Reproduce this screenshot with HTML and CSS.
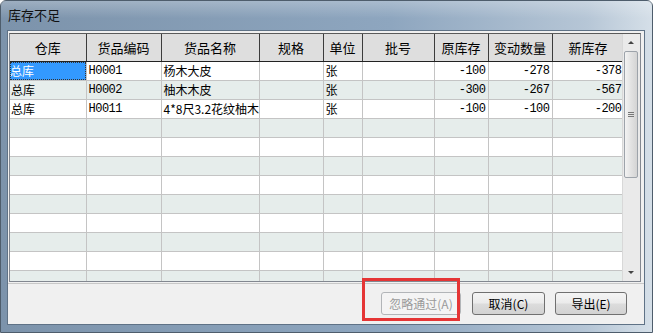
FILE: index.html
```html
<!DOCTYPE html>
<html lang="zh">
<head>
    <meta charset="UTF-8" />
    <title>库存不足</title>
    <link rel="stylesheet" href="styles.css">
</head>
<body>
    <div class="window">
        <div class="titlebar">库存不足</div>
        <div class="client">
            <div class="grid">
                <div class="table-wrap">
                    <table>
                        <colgroup>
                            <col style="width:76px"><col style="width:75px"><col style="width:98px">
                            <col style="width:64px"><col style="width:39px"><col style="width:72px">
                            <col style="width:54px"><col style="width:64px"><col style="width:72px">
                        </colgroup>
                        <thead>
                            <tr>
                                <th>仓库</th><th>货品编码</th><th>货品名称</th><th>规格</th><th>单位</th>
                                <th>批号</th><th>原库存</th><th>变动数量</th><th>新库存</th>
                            </tr>
                        </thead>
                        <tbody>
                            <tr>
                                <td><span class="selected">总库</span></td><td class="code">H0001</td><td>杨木大皮</td><td></td><td>张</td>
                                <td></td><td class="num">-100</td><td class="num">-278</td><td class="num">-378</td>
                            </tr>
                            <tr class="alt">
                                <td>总库</td><td class="code">H0002</td><td>柚木木皮</td><td></td><td>张</td>
                                <td></td><td class="num">-300</td><td class="num">-267</td><td class="num">-567</td>
                            </tr>
                            <tr>
                                <td>总库</td><td class="code">H0011</td><td>4*8尺3.2花纹柚木</td><td></td><td>张</td>
                                <td></td><td class="num">-100</td><td class="num">-100</td><td class="num">-200</td>
                            </tr>
                            <tr class="alt"><td></td><td></td><td></td><td></td><td></td><td></td><td></td><td></td><td></td></tr>
                            <tr><td></td><td></td><td></td><td></td><td></td><td></td><td></td><td></td><td></td></tr>
                            <tr class="alt"><td></td><td></td><td></td><td></td><td></td><td></td><td></td><td></td><td></td></tr>
                            <tr><td></td><td></td><td></td><td></td><td></td><td></td><td></td><td></td><td></td></tr>
                            <tr class="alt"><td></td><td></td><td></td><td></td><td></td><td></td><td></td><td></td><td></td></tr>
                            <tr><td></td><td></td><td></td><td></td><td></td><td></td><td></td><td></td><td></td></tr>
                            <tr class="alt"><td></td><td></td><td></td><td></td><td></td><td></td><td></td><td></td><td></td></tr>
                            <tr><td></td><td></td><td></td><td></td><td></td><td></td><td></td><td></td><td></td></tr>
                            <tr class="alt"><td></td><td></td><td></td><td></td><td></td><td></td><td></td><td></td><td></td></tr>
                            <tr><td></td><td></td><td></td><td></td><td></td><td></td><td></td><td></td><td></td></tr>
                        </tbody>
                    </table>
                </div>
                <div class="scrollbar">
                    <div class="arrow up"></div>
                    <div class="track">
                        <div class="thumb"><span class="grip"></span></div>
                    </div>
                    <div class="arrow down"></div>
                </div>
            </div>
            <div class="footer">
                <button class="btn" disabled>忽略通过(A)</button>
                <button class="btn">取消(C)</button>
                <button class="btn">导出(E)</button>
                <div class="mark"></div>
            </div>
        </div>
    </div>
</body>
</html>
```

FILE: styles.css
```css
body {
    margin: 0;
    background: #ffffff;
    font-family: "Noto Sans CJK SC", "DejaVu Sans", sans-serif;
    font-size: 12px;
    color: #000;
}

.window {
    width: 653px;
    height: 333px;
    box-sizing: border-box;
    background: linear-gradient(to right, #7c93ab 0%, #8ea6bf 60%, #b6c6d6 90%, #d5dfe8 100%);
    border: 1px solid #4e5d6c;
    border-radius: 6px 6px 0 0;
    display: flex;
    flex-direction: column;
}

.titlebar {
    height: 29px;
    line-height: 27px;
    padding-left: 7px;
    font-size: 13px;
    color: #111;
    background: linear-gradient(to bottom, rgba(255,255,255,0.25), rgba(255,255,255,0) 60%);
}

.client {
    position: relative;
    margin: 0 7px 7px 6px;
    flex: 1;
    background: #f0f0f0;
    border: 1px solid #5f7286;
    display: flex;
    flex-direction: column;
}

.grid {
    margin: 2px 0 0 1px;
    width: 632px;
    height: 249px;
    box-sizing: border-box;
    border: 1px solid #828790;
    border-top-color: #5a5a5a;
    background: #fff;
    display: flex;
    overflow: hidden;
}

.table-wrap {
    width: 614px;
    overflow: hidden;
}

table {
    border-collapse: collapse;
    table-layout: fixed;
    width: 614px;
}

th {
    height: 27px;
    background: #dedede;
    font-weight: normal;
    font-size: 13px;
    border-right: 1px solid #3c3c3c;
    border-bottom: 1px solid #222;
    padding: 0;
}

td {
    height: 18px;
    padding: 0 2px;
    border-right: 1px solid #c4c4c4;
    border-bottom: 1px solid #c4c4c4;
    white-space: nowrap;
    overflow: hidden;
    font-size: 12px;
    line-height: 18px;
}

tr.alt td {
    background: #e6edeb;
}

td.code {
    font-family: "Liberation Mono", "DejaVu Sans Mono", monospace;
    font-size: 12px;
    letter-spacing: -0.5px;
}

td.num {
    text-align: right;
    font-family: "Liberation Mono", "DejaVu Sans Mono", monospace;
    letter-spacing: -0.5px;
}

td:first-child {
    padding-left: 1px;
}

.selected {
    display: block;
    margin-left: -1px;
    margin-right: -2px;
    background: #3399ff;
    color: #fff;
    outline: 1px dotted #333;
    outline-offset: -1px;
}

.scrollbar {
    width: 17px;
    background: #eaeaea;
    border-left: 1px solid #d8d8d8;
    display: flex;
    flex-direction: column;
}

.arrow {
    height: 17px;
    position: relative;
}

.arrow::after {
    content: "";
    position: absolute;
    left: 5px;
    top: 7px;
    border-left: 3px solid transparent;
    border-right: 3px solid transparent;
}

.arrow.up::after {
    border-bottom: 3px solid #444;
}

.arrow.down::after {
    border-top: 3px solid #444;
}

.track {
    flex: 1;
    padding-top: 0;
}

.thumb {
    margin: 0 2px 0 1px;
    height: 125px;
    border: 1px solid #9da3aa;
    border-radius: 2px;
    background: linear-gradient(to right, #f3f3f3, #e2e2e2 50%, #d4d4d4);
    display: flex;
    align-items: center;
    justify-content: center;
}

.grip {
    width: 6px;
    height: 5px;
    border-top: 1px solid #777;
    border-bottom: 1px solid #777;
    box-sizing: border-box;
    position: relative;
}

.grip::after {
    content: "";
    position: absolute;
    left: 0;
    right: 0;
    top: 1px;
    border-top: 1px solid #777;
}

.footer {
    margin-top: 1px;
    border-top: 1px solid #c8c8c8;
    flex: 1;
    display: flex;
    justify-content: flex-end;
    align-items: center;
    gap: 10px;
    padding-right: 17px;
    padding-bottom: 2px;
}

.btn {
    height: 23px;
    padding: 0;
    font-family: "Noto Sans CJK SC", sans-serif;
    font-size: 12px;
    color: #000;
    border: 1px solid #707070;
    border-radius: 3px;
    background: linear-gradient(to bottom, #f4f4f4 0%, #ebebeb 48%, #dcdcdc 52%, #d2d2d2 100%);
}

.btn:nth-child(1) {
    width: 80px;
    margin-right: 1px;
    color: #9a9a9a;
    border-color: #b2b5b8;
    background: #f4f4f4;
}

.btn:nth-child(2) {
    width: 73px;
}

.btn:nth-child(3) {
    width: 72px;
}

.mark {
    position: absolute;
    left: 354px;
    top: 247px;
    width: 92px;
    height: 37px;
    border: 3px solid #e53535;
}
```
